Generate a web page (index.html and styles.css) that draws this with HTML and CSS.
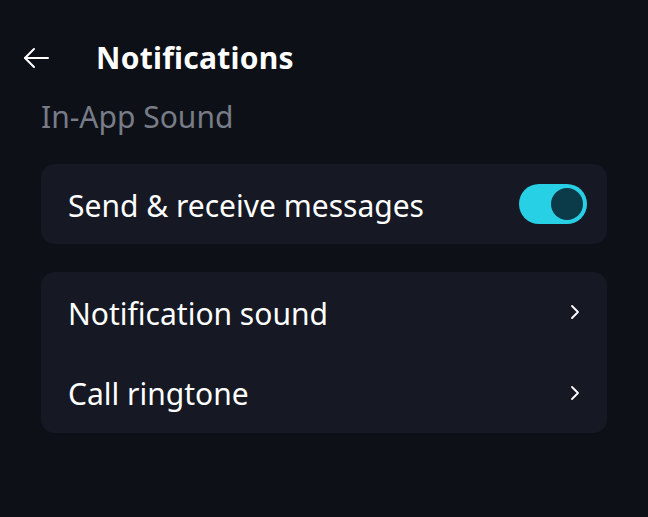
FILE: index.html
```html
<!DOCTYPE html>
<html lang="en">
<head>
  <meta charset="UTF-8" />
  <title>Notifications</title>
  <link rel="stylesheet" href="styles.css">
</head>
<body>
  <header class="top-bar">
    <button class="back-btn" aria-label="Back">
      <svg width="28" height="24" viewBox="0 0 28 24" fill="none" stroke="#ffffff" stroke-width="2" stroke-linecap="round" stroke-linejoin="round">
        <path d="M26 12H3" />
        <path d="M12 3L3 12l9 9" />
      </svg>
    </button>
    <h1 class="title">Notifications</h1>
  </header>

  <main class="content">
    <div class="section-label">In-App Sound</div>

    <div class="card">
      <div class="row">
        <span class="row-text">Send &amp; receive messages</span>
        <div class="toggle on"><div class="knob"></div></div>
      </div>
    </div>

    <div class="card">
      <div class="row">
        <span class="row-text">Notification sound</span>
        <svg class="chevron" width="12" height="18" viewBox="0 0 12 18" fill="none" stroke="#ffffff" stroke-width="1.8" stroke-linecap="round" stroke-linejoin="round"><path d="M3 3l6 6-6 6" /></svg>
      </div>
      <div class="row">
        <span class="row-text">Call ringtone</span>
        <svg class="chevron" width="12" height="18" viewBox="0 0 12 18" fill="none" stroke="#ffffff" stroke-width="1.8" stroke-linecap="round" stroke-linejoin="round"><path d="M3 3l6 6-6 6" /></svg>
      </div>
    </div>
  </main>
</body>
</html>
```

FILE: styles.css
```css
html, body {
  height: 100%;
  margin: 0;
  padding: 0;
  overflow: hidden;
  background: #0d1017;
  color: #ffffff;
  font-family: 'Noto Sans', 'Open Sans', sans-serif;
}

.top-bar {
  display: flex;
  align-items: center;
  padding: 28px 0 0 22px;
  box-sizing: border-box;
  height: 88px;
}

.back-btn {
  background: none;
  border: none;
  padding: 0;
  width: 30px;
  height: 24px;
  display: flex;
  align-items: center;
  cursor: pointer;
}

.title {
  margin: 0 0 0 44px;
  font-size: 30px;
  font-weight: 700;
  line-height: 40px;
  letter-spacing: 0.25px;
}

.content {
  padding: 0 41px;
}

.section-label {
  color: #777c87;
  font-size: 30px;
  line-height: 40px;
  margin-top: 9px;
  margin-bottom: 27px;
}

.card {
  background: #161923;
  border-radius: 14px;
  margin-bottom: 28px;
}

.row {
  display: flex;
  align-items: center;
  justify-content: space-between;
  height: 80px;
  padding: 0 20px 0 27px;
}

.card .row + .row {
  height: 81px;
}

.row-text {
  font-size: 30px;
  line-height: 40px;
  padding-top: 3px;
}

.chevron {
  margin-right: 6px;
}

.toggle {
  width: 68px;
  height: 40px;
  border-radius: 20px;
  background: #28d0e6;
  position: relative;
}

.toggle .knob {
  position: absolute;
  top: 4px;
  right: 4px;
  width: 32px;
  height: 32px;
  border-radius: 50%;
  background: #0b3a48;
}
```
